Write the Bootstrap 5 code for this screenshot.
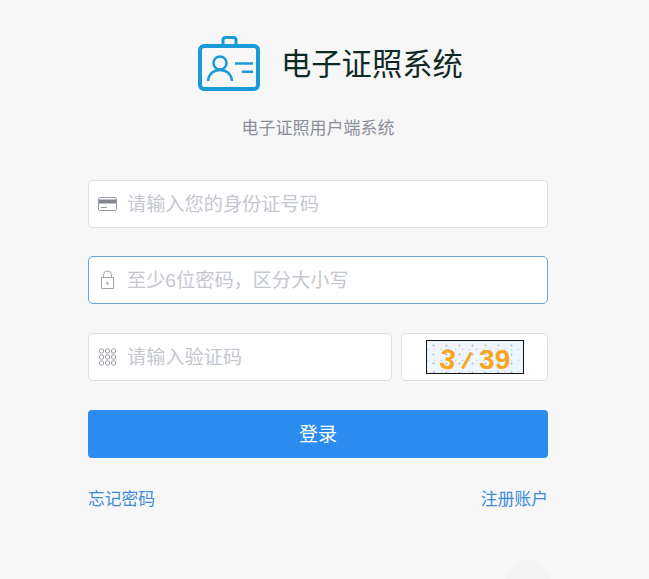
<!DOCTYPE html>
<html lang="zh">
<head>
    <meta charset="UTF-8">
    <title>电子证照系统</title>
    <link href="https://cdn.jsdelivr.net/npm/bootstrap@5.3.3/dist/css/bootstrap.min.css" rel="stylesheet">
    <style>
        html, body {
            height: 100%;
        }
        body {
            background: radial-gradient(circle 24px at 528px 584px, #f3f3f3 98%, #f7f7f7 100%) #f7f7f7;
            font-family: "Liberation Sans", "Noto Sans CJK SC", sans-serif;
            overflow: hidden;
        }
        .login-box {
            width: 460px;
            margin-left: 88px;
            padding-top: 36px;
        }
        .logo-row {
            height: 57px;
            gap: 20px;
            padding-left: 110px;
        }
        .logo-title {
            font-size: 30.3px;
            line-height: 57px;
            color: #0f2a24;
            margin: 0;
            font-weight: 400;
        }
        .logo-sub {
            font-size: 17px;
            line-height: 24px;
            color: #8b8e98;
            margin: 24px 0 39px;
            text-align: center;
        }
        .login-field {
            height: 48px;
            background: #fff;
            border: 1px solid #e0e0e0;
            border-radius: 5px;
        }
        .login-field.is-active {
            border-color: #6ba3d9;
        }
        .login-field svg {
            flex: none;
            margin-left: 9px;
        }
        .login-field input {
            border: 0;
            outline: 0;
            background: transparent;
            width: 100%;
            min-width: 0;
            padding: 2px 0 0 10px;
            font-size: 19.2px;
        }
        .login-field input::placeholder {
            color: #c5c7cf;
            opacity: 1;
        }
        .field-gap {
            margin-bottom: 28px;
        }
        .field-gap-b {
            margin-bottom: 29px;
        }
        .code-field {
            width: 304px;
        }
        .captcha-box {
            width: 147px;
            height: 48px;
            background: #fff;
            border: 1px solid #e0e0e0;
            border-radius: 5px;
        }
        .captcha-img {
            width: 98px;
            height: 34px;
            border: 1.5px solid #111;
            padding-left: 13px;
            background-color: #eef5fb;
            background-image:
                radial-gradient(circle, #b4c0c8 0.8px, transparent 1.2px),
                radial-gradient(circle, #cbd5dc 0.7px, transparent 1.1px);
            background-size: 13px 9px, 7px 11px;
            background-position: 0 0, 4px 3px;
            font-weight: 700;
            font-size: 28px;
            line-height: 31px;
            color: #fba41e;
        }
        .captcha-img span {
            display: inline-block;
            margin-top: 3px;
        }
        .cap-a {
            transform: rotate(8deg);
        }
        .cap-b {
            transform: rotate(18deg);
            width: 24px;
            text-align: center;
            font-size: 24px;
        }
        .btn-login {
            height: 48px;
            background-color: #2b8cf0;
            border: 0;
            border-radius: 4px;
            color: #fff;
            font-size: 19px;
            padding-top: 8px;
        }
        .btn-login:hover {
            background-color: #2480de;
            color: #fff;
        }
        .login-links {
            margin-top: 29px;
            font-size: 16.8px;
            line-height: 26px;
        }
        .login-links a {
            color: #3c8bdc;
            text-decoration: none;
        }
    </style>
</head>
<body>
<div class="login-box">
    <div class="d-flex align-items-center logo-row">
        <svg width="63" height="57" viewBox="0 0 63 57" fill="none" stroke="#1b9ad8">
            <rect x="2" y="10" width="58" height="43" rx="4" stroke-width="4"/>
            <path d="M25 9V4a2.500 2.500 0 0 1 2.500-2.500h8A2.500 2.500 0 0 1 38 4v5" stroke-width="3"/>
            <circle cx="22" cy="27" r="6.500" stroke-width="2.500"/>
            <path d="M10 45c.5-7 5.500-11 12-11s11.500 4 12 11" stroke-width="2.500"/>
            <path d="M37 27.500h18M44 35.700h11" stroke-width="2.500"/>
        </svg>
        <h1 class="logo-title">电子证照系统</h1>
    </div>
    <p class="logo-sub">电子证照用户端系统</p>

    <div class="login-field d-flex align-items-center field-gap">
        <svg width="19" height="14" viewBox="0 0 19 14" fill="none">
            <rect x=".5" y=".5" width="18" height="13" rx="1.500" stroke="#9a9ca6"/>
            <rect x="1" y="2.500" width="17" height="4" fill="#83858f"/>
            <path d="M3 10.500h6" stroke="#9a9ca6"/>
        </svg>
        <input type="text" placeholder="请输入您的身份证号码">
    </div>
    <div class="login-field is-active d-flex align-items-center field-gap-b">
        <svg width="19" height="20" viewBox="0 0 19 20" fill="none" stroke="#a3a5ae">
            <rect x="3.500" y="7.500" width="12" height="11"/>
            <path d="M5.500 7.500V5a4 4 0 0 1 8 0v2.500"/>
            <path d="M9.500 12v2.500" stroke-width="2"/>
        </svg>
        <input type="password" placeholder="至少6位密码，区分大小写">
    </div>
    <div class="d-flex justify-content-between field-gap-b">
        <div class="login-field code-field d-flex align-items-center">
            <svg width="19" height="18" viewBox="0 0 19 18" fill="none" stroke="#9a9ca6">
                <circle cx="3.500" cy="3" r="2.200"/><circle cx="9.500" cy="3" r="2.200"/><circle cx="15.500" cy="3" r="2.200"/>
                <circle cx="3.500" cy="9" r="2.200"/><circle cx="9.500" cy="9" r="2.200"/><circle cx="15.500" cy="9" r="2.200"/>
                <circle cx="3.500" cy="15" r="2.200"/><circle cx="9.500" cy="15" r="2.200"/><circle cx="15.500" cy="15" r="2.200"/>
            </svg>
            <input type="text" placeholder="请输入验证码">
        </div>
        <div class="captcha-box d-flex align-items-center justify-content-center">
            <div class="captcha-img text-nowrap"><span class="cap-a">3</span><span class="cap-b">/</span><span>3</span><span>9</span></div>
        </div>
    </div>
    <button class="btn btn-login w-100 d-block">登录</button>
    <div class="d-flex justify-content-between login-links">
        <a href="#">忘记密码</a>
        <a href="#">注册账户</a>
    </div>
</div>
</body>
</html>
